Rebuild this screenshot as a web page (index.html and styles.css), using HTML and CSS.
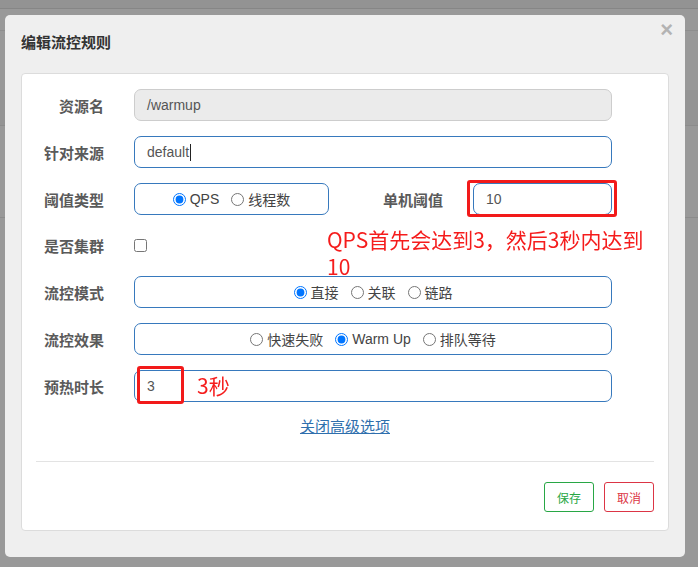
FILE: index.html
```
<!DOCTYPE html>
<html>
  <head>
    <meta charset="utf-8" />
    <title>编辑流控规则</title>
    <link rel="stylesheet" href="styles.css">
  </head>

  <body>
    <!-- page behind the backdrop -->
    <div class="underlay">
      <div class="u-top"></div>
      <div class="u-nav"></div>
      <div class="u-gap1"></div>
      <div class="u-band"></div>
      <div class="u-gap2"></div>
    </div>

    <div class="modal">
      <div class="modal-header">
        <span class="modal-title">编辑流控规则</span>
        <span class="close">&times;</span>
      </div>

      <div class="card">
        <div class="form">
          <div class="row">
            <label class="lbl">资源名</label>
            <div class="field disabled">/warmup</div>
          </div>

          <div class="row">
            <label class="lbl">针对来源</label>
            <div class="field">default<span class="caret"></span></div>
          </div>

          <div class="row">
            <label class="lbl">阈值类型</label>
            <div class="field radios small">
              <label class="opt"><input type="radio" name="grade" checked />QPS</label>
              <label class="opt"><input type="radio" name="grade" />线程数</label>
            </div>
            <label class="lbl lbl-mid">单机阈值</label>
            <div class="field grow">10</div>
          </div>

          <div class="row row-check">
            <label class="lbl">是否集群</label>
            <input type="checkbox" class="check" />
          </div>

          <div class="row">
            <label class="lbl">流控模式</label>
            <div class="field radios">
              <label class="opt"><input type="radio" name="mode" checked />直接</label>
              <label class="opt"><input type="radio" name="mode" />关联</label>
              <label class="opt"><input type="radio" name="mode" />链路</label>
            </div>
          </div>

          <div class="row">
            <label class="lbl">流控效果</label>
            <div class="field radios">
              <label class="opt"><input type="radio" name="effect" />快速失败</label>
              <label class="opt"><input type="radio" name="effect" checked />Warm Up</label>
              <label class="opt"><input type="radio" name="effect" />排队等待</label>
            </div>
          </div>

          <div class="row">
            <label class="lbl">预热时长</label>
            <div class="field">3</div>
          </div>

          <div class="more"><a href="#">关闭高级选项</a></div>
        </div>

        <div class="footer">
          <button class="btn btn-save">保存</button>
          <button class="btn btn-cancel">取消</button>
        </div>
      </div>
    </div>

    <!-- red notes drawn over the screenshot -->
    <div class="mark mark-qps"></div>
    <div class="mark mark-warm"></div>
    <div class="note note-qps">QPS首先会达到3，然后3秒内达到<br />10</div>
    <div class="note note-warm">3秒</div>
  </body>
</html>
```

FILE: styles.css
```
html {
  font-family: "Liberation Sans", "Noto Sans CJK SC", sans-serif;
  font-size: 14px;
}

body {
  margin: 0;
  background: #999;
  height: 567px;
  overflow: hidden;
}

/* page behind */
.u-top {
  height: 8px;
  background: #939393;
  border-bottom: 1px solid #868686;
}
.u-nav {
  height: 21px;
  border-bottom: 1px solid #8e8e8e;
}
.u-gap1 {
  height: 59px;
}
.u-band {
  height: 35px;
  background: #949494;
  border-bottom: 1px solid #8c8c8c;
}
.u-gap2 {
  height: 91px;
  border-bottom: 1px solid #8c8c8c;
}

/* dialog */
.modal {
  position: fixed;
  left: 5px;
  top: 15px;
  width: 680px;
  height: 542px;
  background: #efefef;
  border-radius: 5px;
}

.modal-header {
  position: relative;
  height: 58px;
  padding: 0 16px;
  display: flex;
  align-items: center;
  box-sizing: border-box;
}
.modal-title {
  font-size: 15px;
  font-weight: bold;
  color: #333;
  margin-top: -5px;
}
.close {
  position: absolute;
  right: 12px;
  top: 2px;
  font-size: 22px;
  font-weight: bold;
  color: #b3b3b3;
}

.card {
  margin: 0 16px;
  height: 458px;
  box-sizing: border-box;
  background: #fff;
  border: 1px solid #dcdcdc;
  border-radius: 4px;
}

.form {
  padding-top: 15px;
}

.row {
  display: flex;
  align-items: center;
  height: 32px;
  margin-bottom: 15px;
}
.row-check {
  height: 31px;
}

.lbl {
  width: 82px;
  flex: none;
  margin-right: 30px;
  text-align: right;
  font-size: 15px;
  font-weight: bold;
  color: #5a5a5a;
}
.lbl-mid {
  width: 114px;
}

.field {
  width: 478px;
  height: 32px;
  box-sizing: border-box;
  border: 1px solid #3779bd;
  border-radius: 7px;
  padding-left: 12px;
  display: flex;
  align-items: center;
  color: #555;
  font-size: 14px;
}
.field.disabled {
  background: #ebebeb;
  border-color: #cdcdcd;
}
.field.small {
  width: 195px;
}
.field.grow {
  width: 139px;
}
.caret {
  display: inline-block;
  width: 1px;
  height: 17px;
  background: #222;
  margin-left: 1px;
}

.radios {
  justify-content: center;
  padding-left: 0;
  gap: 12px;
  color: #444;
}
.opt {
  display: flex;
  align-items: center;
}
.opt input {
  width: 13px;
  height: 13px;
  margin: 0 4px 0 0;
}

.check {
  width: 13px;
  height: 13px;
  margin: 0;
}

.more {
  text-align: center;
  margin-top: 3px;
  line-height: 20px;
  font-size: 15px;
  margin-bottom: 24px;
}
.more a {
  color: #2f6fad;
}

.footer {
  margin: 0 14px;
  border-top: 1px solid #e3e3e3;
  padding-top: 20px;
  display: flex;
  justify-content: flex-end;
  gap: 10px;
}

.btn {
  width: 50px;
  height: 30px;
  background: #fff;
  border-radius: 3px;
  font-family: "Noto Sans CJK SC", sans-serif;
  font-size: 12px;
  padding: 0;
}
.btn-save {
  border: 1px solid #28a745;
  color: #28a745;
}
.btn-cancel {
  border: 1px solid #dc3545;
  color: #dc3545;
}

/* annotations */
.mark {
  position: absolute;
  border: 3px solid #f21a1a;
  border-radius: 3px;
  box-sizing: border-box;
}
.mark-qps {
  left: 467px;
  top: 180px;
  width: 150px;
  height: 37px;
}
.mark-warm {
  left: 137px;
  top: 366px;
  width: 47px;
  height: 38px;
}

.note {
  position: absolute;
  color: #f51c1c;
  font-family: "Noto Sans CJK SC", sans-serif;
  font-size: 21px;
  line-height: 27px;
}
.note-qps {
  left: 327px;
  top: 226px;
}
.note-warm {
  left: 197px;
  top: 372px;
}
```
